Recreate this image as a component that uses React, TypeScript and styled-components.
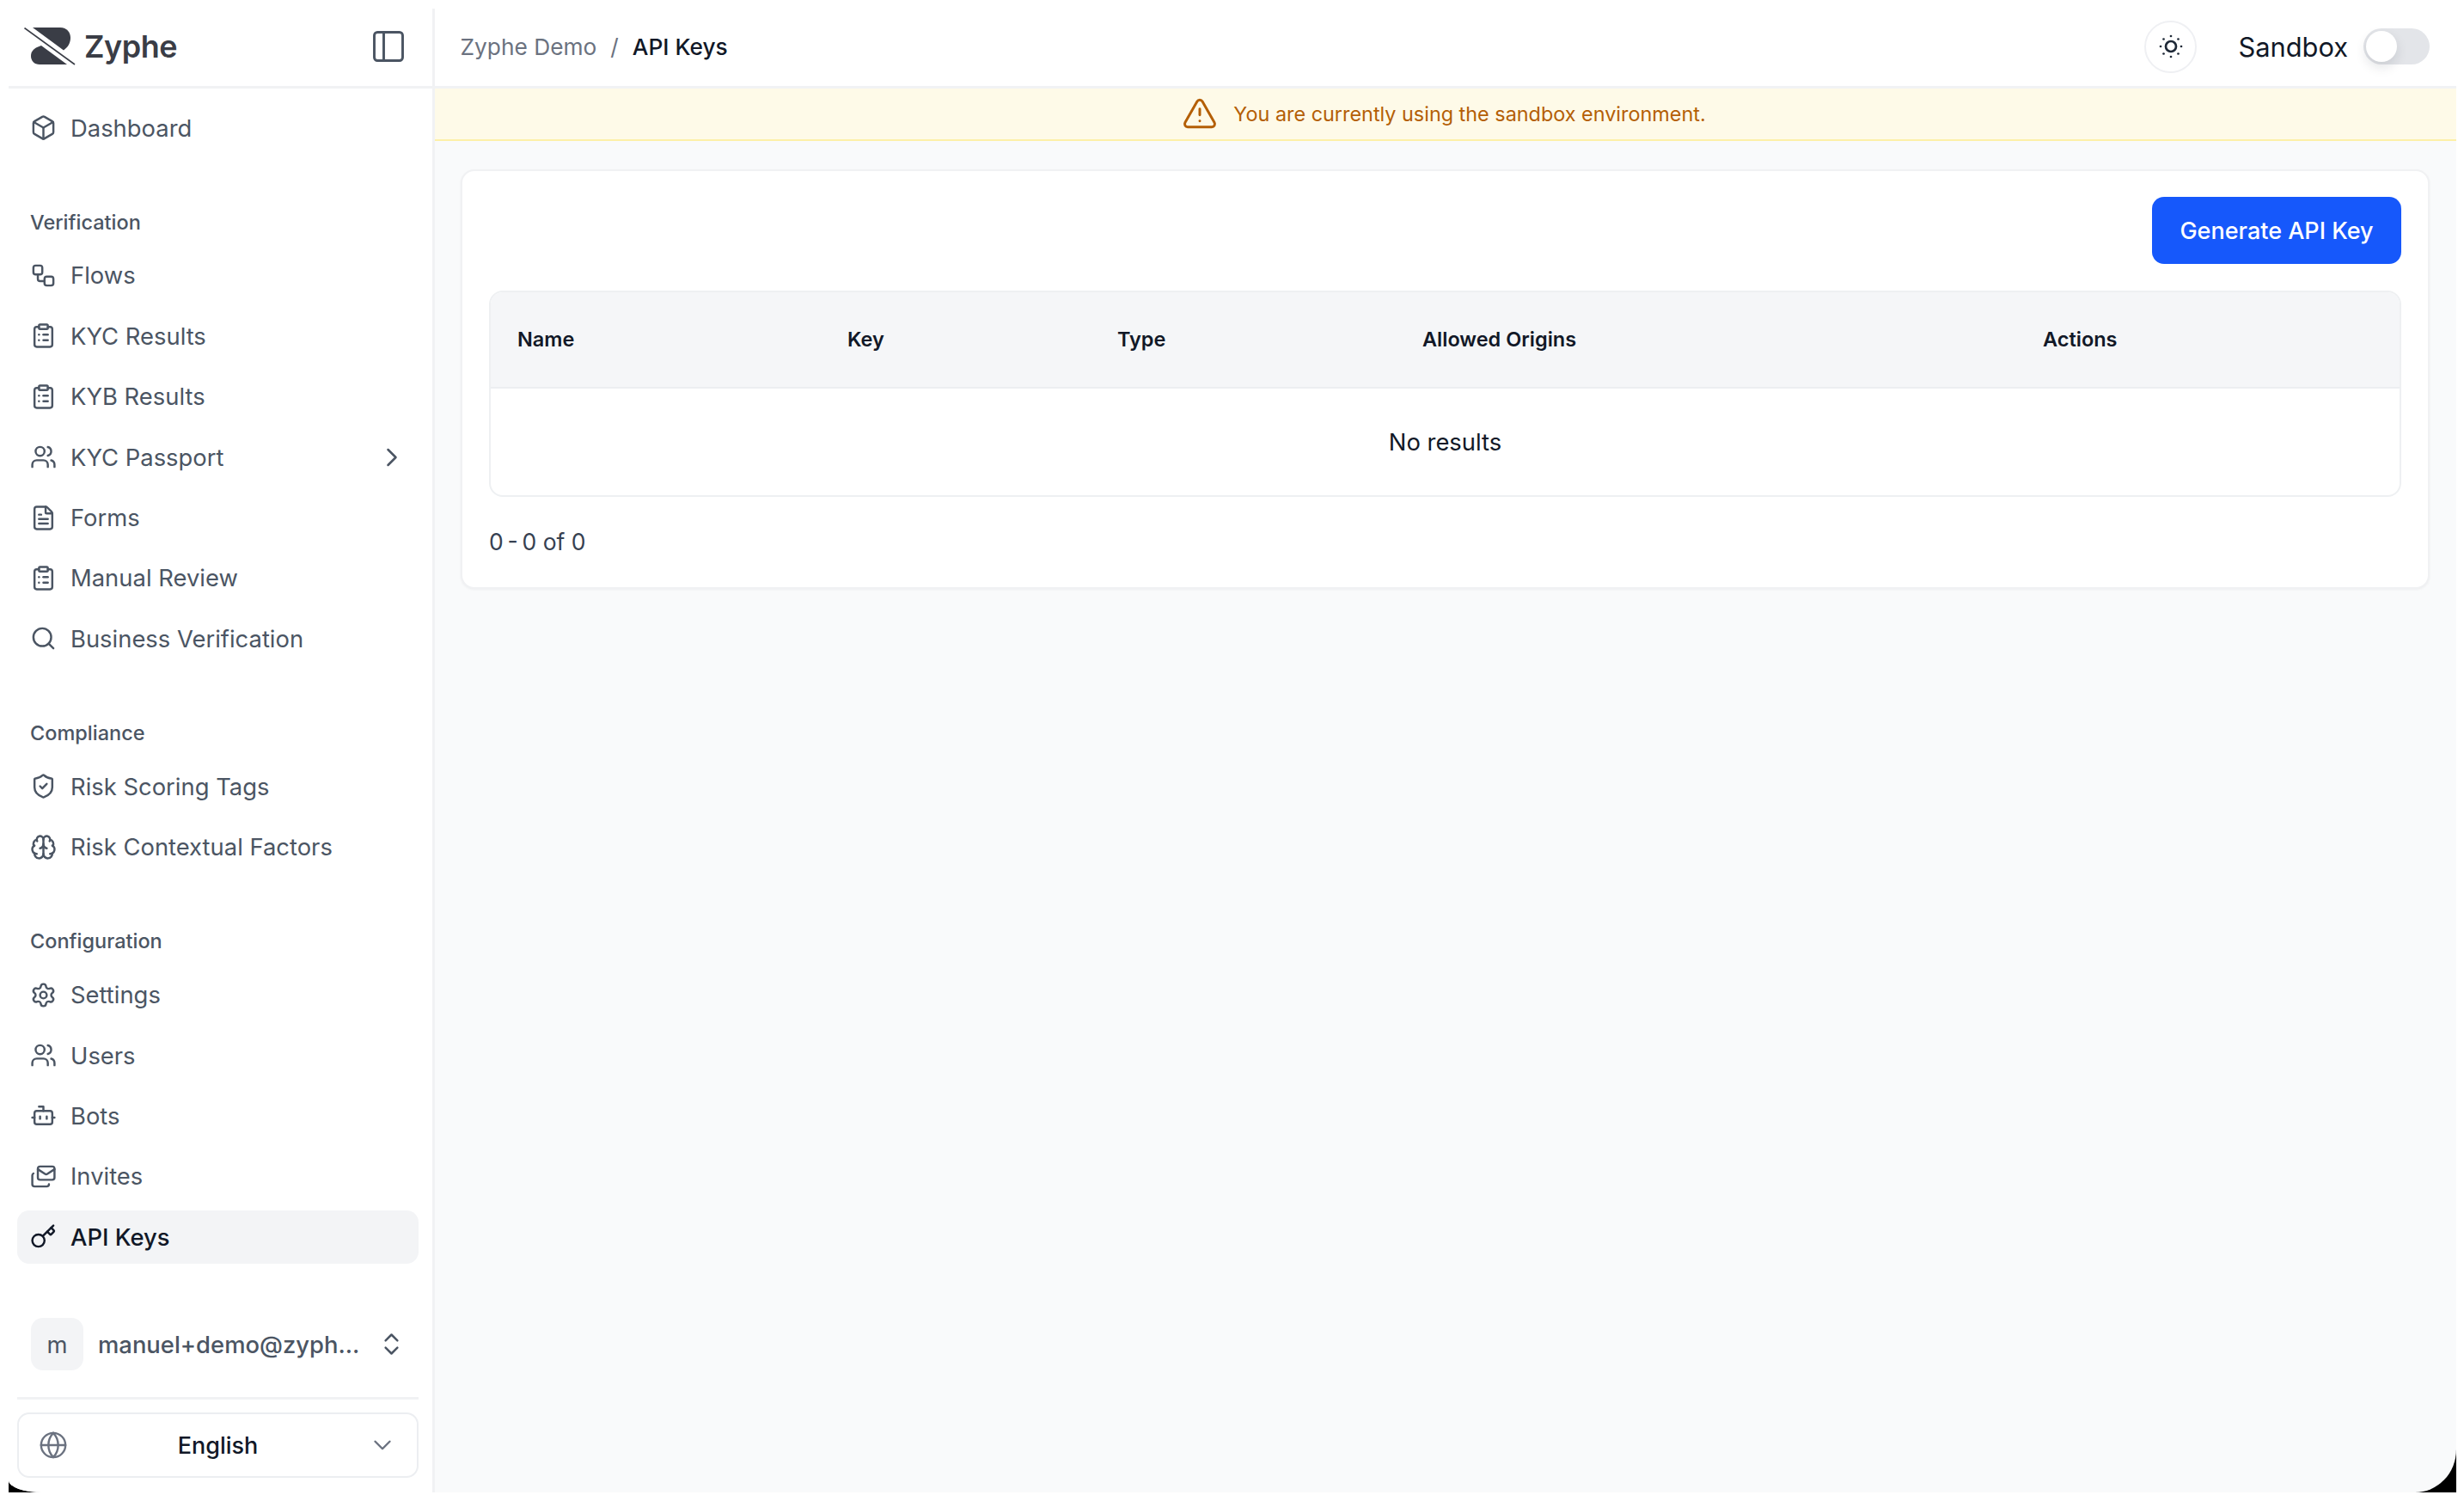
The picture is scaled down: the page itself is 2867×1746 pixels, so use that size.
import React from 'react';
import styled, { createGlobalStyle } from 'styled-components';
import {
  Bot,
  Box,
  Brain,
  ChevronDown,
  ChevronRight,
  ChevronsUpDown,
  ClipboardList,
  FileText,
  Globe,
  Key,
  LucideIcon,
  Mails,
  PanelLeft,
  Search,
  Settings,
  ShieldCheck,
  SunDim,
  TriangleAlert,
  Users,
  Workflow,
} from 'lucide-react';

const GlobalStyle = createGlobalStyle`
  * {
    box-sizing: border-box;
  }
  html, body {
    margin: 0;
    padding: 0;
    background: #ffffff;
  }
  body {
    font-family: Inter, "Liberation Sans", sans-serif;
  }
`;

const Backdrop = styled.div`
  height: 1746px;
  padding: 10px 9px 10px 10px;
  background: linear-gradient(to top, #000000 60px, transparent 60px) no-repeat;
  background-clip: content-box;
  background-origin: content-box;
`;

const Frame = styled.div`
  display: flex;
  height: 100%;
  background: #f9fafb;
  overflow: hidden;
  border-bottom-left-radius: 40px 14px;
  border-bottom-right-radius: 48px 50px;
`;

const Sidebar = styled.aside`
  display: flex;
  flex-direction: column;
  flex: 0 0 496px;
  width: 496px;
  min-width: 0;
  background: #ffffff;
  border-right: 3px solid #f1f2f4;
  padding-bottom: 17px;
`;

const Brand = styled.div`
  display: flex;
  align-items: center;
  flex: 0 0 93px;
  padding: 0 29.5px 2px 18px;
  border-bottom: 3px solid #f1f2f4;
`;

const BrandName = styled.span`
  margin-left: 10px;
  font-size: 36px;
  font-weight: 600;
  letter-spacing: -0.5px;
  color: #3a3d46;
`;

const PanelToggle = styled.span`
  display: flex;
  margin-left: auto;
  color: #4b5563;
`;

const Nav = styled.nav`
  display: flex;
  flex-direction: column;
  padding: 15px 16px 0 10px;
`;

const Group = styled.div<{ $first?: boolean }>`
  display: flex;
  flex-direction: column;
  gap: 8.4px;
  margin-top: ${(props) => (props.$first ? '0' : '56px')};
`;

const GroupLabel = styled.div`
  display: flex;
  align-items: center;
  height: 44px;
  margin-bottom: 1.6px;
  padding-left: 15px;
  font-size: 23.5px;
  font-weight: 500;
  color: #4b5563;
`;

const NavRow = styled.div<{ $active?: boolean }>`
  display: flex;
  align-items: center;
  gap: 17px;
  height: 62px;
  padding: 0 16px 1px;
  border-radius: 14px;
  font-size: 27.4px;
  font-weight: ${(props) => (props.$active ? 500 : 400)};
  color: ${(props) => (props.$active ? '#111827' : '#4b5563')};
  background: ${(props) => (props.$active ? '#f3f4f6' : 'transparent')};
  svg {
    flex: 0 0 31px;
    width: 31px;
    height: 31px;
    margin: 0 -1px;
    stroke-width: 1.9;
  }
`;

const RowChevron = styled.span`
  display: flex;
  margin-left: auto;
  margin-right: 1px;
  svg {
    flex: 0 0 36px;
    width: 36px;
    height: 36px;
    margin: 0 -3.5px;
    stroke-width: 1.7;
  }
`;

const Footer = styled.div`
  display: flex;
  flex-direction: column;
  margin-top: auto;
  padding: 0 16px 0 10px;
`;

const UserRow = styled.div`
  display: flex;
  align-items: center;
  gap: 17px;
  padding: 0 17px 0 16px;
  color: #4b5563;
  svg {
    flex: 0 0 33px;
    width: 33px;
    height: 33px;
    margin: 0 -2px 0 auto;
    stroke-width: 1.8;
  }
`;

const Avatar = styled.div`
  display: flex;
  flex: 0 0 61px;
  align-items: center;
  justify-content: center;
  height: 61px;
  border-radius: 14px;
  background: #f3f4f6;
  font-size: 27.4px;
`;

const Email = styled.span`
  white-space: nowrap;
  font-size: 27.4px;
  font-weight: 500;
`;

const Separator = styled.div`
  height: 3px;
  margin: 31px 0 15px;
  background: #f1f2f4;
`;

const LanguageSelect = styled.div`
  display: grid;
  grid-template-columns: 30px 1fr 30px;
  align-items: center;
  justify-items: center;
  height: 76px;
  padding: 0 25px;
  border: 2px solid #eceef1;
  border-radius: 14px;
  background: #ffffff;
  font-size: 27px;
  font-weight: 500;
  color: #111827;
  svg {
    width: 34px;
    height: 34px;
    margin: 0 -2px;
    color: #6b7280;
    stroke-width: 1.7;
  }
`;

const LanguageName = styled.span`
  text-align: center;
`;

const Main = styled.main`
  display: flex;
  flex: 1;
  flex-direction: column;
  min-width: 0;
`;

const TopBar = styled.header`
  display: flex;
  align-items: center;
  flex: 0 0 93px;
  padding: 0 31px 2px 29.5px;
  background: #ffffff;
  border-bottom: 3px solid #f1f2f4;
`;

const Crumbs = styled.div`
  display: flex;
  align-items: center;
  gap: 16px;
  font-size: 26.3px;
`;

const CrumbParent = styled.span`
  color: #6b7280;
`;

const CrumbSlash = styled.span`
  color: #6b7280;
`;

const CrumbCurrent = styled.span`
  font-weight: 500;
  color: #111827;
`;

const TopActions = styled.div`
  display: flex;
  align-items: center;
  margin-left: auto;
`;

const ThemeButton = styled.div`
  display: flex;
  align-items: center;
  justify-content: center;
  width: 61px;
  height: 61px;
  border: 2px solid #eff0f3;
  border-radius: 50%;
  margin-right: 48px;
  color: #1f2937;
`;

const SandboxLabel = styled.span`
  margin-right: 18px;
  font-size: 30.8px;
  color: #111827;
`;

const Switch = styled.div`
  display: flex;
  align-items: center;
  width: 77px;
  height: 42px;
  padding: 3px;
  border-radius: 21px;
  background: #e3e5e9;
`;

const SwitchThumb = styled.div`
  width: 36px;
  height: 36px;
  border-radius: 50%;
  background: #ffffff;
  box-shadow: 0 6px 14px rgba(17, 24, 39, 0.12);
`;

const Banner = styled.div`
  display: flex;
  align-items: center;
  justify-content: center;
  gap: 18px;
  flex: 0 0 61px;
  padding: 0 4px 1px 0;
  background: #fefae8;
  border-bottom: 2px solid #fdf0a8;
  font-size: 23.4px;
  color: #b45f06;
  svg {
    width: 42px;
    height: 42px;
    stroke-width: 1.7;
  }
`;

const Content = styled.div`
  padding: 33px 31px 0 30px;
`;

const Card = styled.section`
  padding: 30px 31px 37px 31px;
  border: 2px solid #f0f1f3;
  border-radius: 16px;
  background: #ffffff;
  box-shadow: 0 1px 3px rgba(17, 24, 39, 0.05);
`;

const CardActions = styled.div`
  display: flex;
  justify-content: flex-end;
  margin-bottom: 31px;
`;

const PrimaryButton = styled.button`
  height: 78px;
  width: 290px;
  border: 0;
  border-radius: 14px;
  background: #1658fb;
  font-family: inherit;
  font-size: 27px;
  font-weight: 500;
  color: #ffffff;
`;

const Table = styled.div`
  border: 2px solid #eef0f2;
  border-radius: 16px;
  overflow: hidden;
`;

const HeadRow = styled.div`
  display: grid;
  grid-template-columns: 384px 314px 355px 722px 1fr;
  align-items: center;
  height: 112px;
  padding: 0 0 2px 31px;
  background: #f5f6f8;
  border-bottom: 2px solid #eceef1;
`;

const HeadCell = styled.div`
  font-size: 23.5px;
  font-weight: 600;
  color: #111827;
`;

const EmptyRow = styled.div`
  display: flex;
  align-items: center;
  justify-content: center;
  height: 124px;
  font-size: 27.4px;
  color: #111827;
`;

const Pagination = styled.div`
  margin-top: 36px;
  font-size: 26.5px;
  color: #374151;
`;

interface INavItem {
  label: string;
  icon: LucideIcon;
  active?: boolean;
  expandable?: boolean;
}

interface INavGroup {
  title?: string;
  items: INavItem[];
}

const navGroups: INavGroup[] = [
  { items: [{ label: 'Dashboard', icon: Box }] },
  {
    title: 'Verification',
    items: [
      { label: 'Flows', icon: Workflow },
      { label: 'KYC Results', icon: ClipboardList },
      { label: 'KYB Results', icon: ClipboardList },
      { label: 'KYC Passport', icon: Users, expandable: true },
      { label: 'Forms', icon: FileText },
      { label: 'Manual Review', icon: ClipboardList },
      { label: 'Business Verification', icon: Search },
    ],
  },
  {
    title: 'Compliance',
    items: [
      { label: 'Risk Scoring Tags', icon: ShieldCheck },
      { label: 'Risk Contextual Factors', icon: Brain },
    ],
  },
  {
    title: 'Configuration',
    items: [
      { label: 'Settings', icon: Settings },
      { label: 'Users', icon: Users },
      { label: 'Bots', icon: Bot },
      { label: 'Invites', icon: Mails },
      { label: 'API Keys', icon: Key, active: true },
    ],
  },
];

const columns = ['Name', 'Key', 'Type', 'Allowed Origins', 'Actions'];

const Logo = () => (
  <svg width="60" height="44" viewBox="0 0 60 44" fill="#3a3d46">
    <path d="M10 0H42C50 0 54 6 54 12C54 18 51 23 46 26.5Z" />
    <path d="M20 21L50 43H18C12 43 8 39 8 33C8 28 11 25 15 23Z" />
    <path d="M0.5 0.5L59 43" stroke="#3a3d46" strokeWidth="1.6" fill="none" />
  </svg>
);

const App = () => {
  return (
    <Backdrop>
      <GlobalStyle />
      <Frame>
        <Sidebar>
          <Brand>
            <Logo />
            <BrandName>Zyphe</BrandName>
            <PanelToggle>
              <PanelLeft size={44} strokeWidth={1.6} />
            </PanelToggle>
          </Brand>
          <Nav>
            {navGroups.map((group, index) => (
              <Group key={group.title || 'main'} $first={index === 0}>
                {group.title && <GroupLabel>{group.title}</GroupLabel>}
                {group.items.map(({ label, icon: Icon, active, expandable }) => (
                  <NavRow key={label} $active={active}>
                    <Icon />
                    {label}
                    {expandable && (
                      <RowChevron>
                        <ChevronRight />
                      </RowChevron>
                    )}
                  </NavRow>
                ))}
              </Group>
            ))}
          </Nav>
          <Footer>
            <UserRow>
              <Avatar>m</Avatar>
              <Email>manuel+demo@zyph...</Email>
              <ChevronsUpDown />
            </UserRow>
            <Separator />
            <LanguageSelect>
              <Globe />
              <LanguageName>English</LanguageName>
              <ChevronDown />
            </LanguageSelect>
          </Footer>
        </Sidebar>
        <Main>
          <TopBar>
            <Crumbs>
              <CrumbParent>Zyphe Demo</CrumbParent>
              <CrumbSlash>/</CrumbSlash>
              <CrumbCurrent>API Keys</CrumbCurrent>
            </Crumbs>
            <TopActions>
              <ThemeButton>
                <SunDim size={36} strokeWidth={1.8} />
              </ThemeButton>
              <SandboxLabel>Sandbox</SandboxLabel>
              <Switch>
                <SwitchThumb />
              </Switch>
            </TopActions>
          </TopBar>
          <Banner>
            <TriangleAlert />
            You are currently using the sandbox environment.
          </Banner>
          <Content>
            <Card>
              <CardActions>
                <PrimaryButton>Generate API Key</PrimaryButton>
              </CardActions>
              <Table>
                <HeadRow>
                  {columns.map((column) => (
                    <HeadCell key={column}>{column}</HeadCell>
                  ))}
                </HeadRow>
                <EmptyRow>No results</EmptyRow>
              </Table>
              <Pagination>{'0\u2009-\u20090 of 0'}</Pagination>
            </Card>
          </Content>
        </Main>
      </Frame>
    </Backdrop>
  );
};

export default App;
